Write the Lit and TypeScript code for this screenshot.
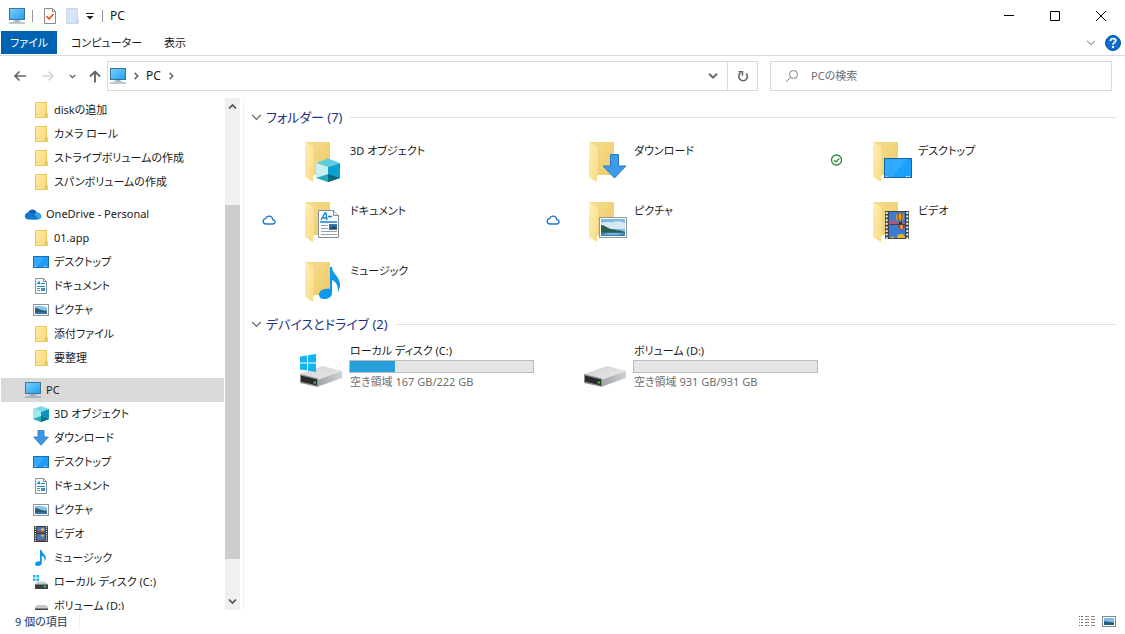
import { LitElement, html, svg, css, nothing, TemplateResult, SVGTemplateResult } from "lit";
import { customElement, property } from "lit/decorators.js";

const icons: Record<string, TemplateResult> = {
  pc: html`<svg width="16" height="16" viewBox="0 0 16 16"><defs><linearGradient id="pcg" x1="0" y1="0" x2="1" y2="1"><stop offset="0" stop-color="#7fd0fb"/><stop offset="1" stop-color="#1f9fee"/></linearGradient></defs><rect x="0.5" y="0.5" width="15" height="11" fill="url(#pcg)" stroke="#3c7396"/><path d="M6 12h4v1.3H6z" fill="#a9bac5"/><path d="M4 13.3h8" stroke="#7c93a2" stroke-width=".7"/><path d="M0 15h16" stroke="#7e96a5"/></svg>`,
  folder: html`<svg width="16" height="16" viewBox="0 0 16 16"><defs><linearGradient id="sfg" x1="0" y1="0" x2="1" y2="1"><stop offset="0" stop-color="#ffe9a2"/><stop offset="1" stop-color="#fcdb78"/></linearGradient></defs><path d="M2.5.5h11v10.200l1 .8v4h-12z" fill="url(#sfg)" stroke="#eac858"/><path d="M12.500 15.300v-4.300l1.200-1" fill="none" stroke="#e3b93c"/></svg>`,
  cloud: html`<svg width="18" height="16" viewBox="0 0 18 16"><path d="M4 7C5 3.500 10 1.500 13 6.500L9 10z" fill="#0f5fae"/><path d="M12 6.200c3.300-.4 5.400 1.700 5.400 4 0 2-1.400 3.300-3.300 3.300H7z" fill="#35a5ea"/><path d="M4.700 6.300c2-.3 3.600.6 5 1.600l4.600 5.200c-.8.5-1.400.4-2.300.4H4.500C2.200 13.500.7 11.900.8 9.900.9 8 2.500 6.400 4.700 6.300z" fill="#1277cd"/></svg>`,
  desktop: html`<svg width="16" height="16" viewBox="0 0 16 16"><rect x=".5" y="2.500" width="15" height="11" fill="#1c9ef8" stroke="#176fae"/><path d="M1 3h11L4 13H1z" fill="#41b1ff" opacity=".6"/><path d="M2 12.500h1M11 12.500h3" stroke="#c3e7ff" stroke-dasharray="1 .5"/></svg>`,
  doc: html`<svg width="16" height="16" viewBox="0 0 16 16"><path d="M2.500.5h8l3 3v12h-11z" fill="#fafcfd" stroke="#8a949b"/><path d="M10.500.5v3h3" fill="none" stroke="#8a949b"/><path d="M4 6.500 6 3.200 7 6.500M5 5.500h2M8 5.500h4M4 8.500h8" fill="none" stroke="#1b87cf"/><path d="M4 10.500h3M4 12.500h3" stroke="#6f8796"/><path d="M8 10h4v3H8z" fill="#3b8fc6"/></svg>`,
  picture: html`<svg width="16" height="16" viewBox="0 0 16 16"><rect x=".5" y="2.500" width="15" height="11" fill="#fff" stroke="#8b959c"/><path d="M2 4h12v8H2z" fill="#83c1ee"/><path d="M2 6c4 0 6 3 12 2.800V10H2z" fill="#2d5c63"/><path d="M2 10h12v2H2z" fill="#376fae"/><path d="M9 4h5v2z" fill="#e6f3fc"/></svg>`,
  cube: html`<svg width="16" height="16" viewBox="0 0 16 16"><path d="m0 3 8-3 8 3-8 3z" fill="#79dbe8"/><path d="m0 3 8 3v10l-8-3z" fill="#a5e6ee"/><path d="m16 3-8 3v10l8-3z" fill="#0a96bd"/><path d="m0 13 8-3v6z" fill="#20aec1"/><path d="m16 13-8-3v6z" fill="#076c88"/></svg>`,
  down: html`<svg width="16" height="16" viewBox="0 0 16 16"><path d="M5 .5h6V7h4.300L8 15.300.7 7H5z" fill="#3c97e6" stroke="#2676bd" stroke-width=".8"/></svg>`,
  video: html`<svg width="16" height="16" viewBox="0 0 16 16"><path d="M1 0h14v16H1z" fill="#363636"/><path d="M2.500.5v15M13.500.5v15" stroke="#e8e8e8" stroke-width="1.400" stroke-dasharray="1.200 1"/><path d="M4 1h8v6H4zM4 8h8v7H4z" fill="#3e78c4"/><path d="M4 5h4l4 1v1H4zM4 13l4 1 4-1v2H4z" fill="#8a4a55"/><circle cx="9.500" cy="3.500" r="1.700" fill="#e8b02d"/><circle cx="9.500" cy="9.500" r="1.300" fill="#edb135"/></svg>`,
  music: html`<svg width="16" height="16" viewBox="0 0 16 16"><path d="M7 0h1.500c.3 3.500 4.500 4.200 4.300 8.300-.1 1.500-.8 2.700-1.300 3.200.6-3.600-.8-4.900-2.700-5.500v6.700C8.800 14.800 7 16 5 16c-1.700 0-3-.8-3-2.200 0-1.900 2.700-3.100 5-2.500z" fill="#0d93ea"/></svg>`,
  diskWin: html`<svg width="16" height="16" viewBox="0 0 16 16"><path d="M0 1h2.500v2.500H0zM3.500 1H6v2.500H3.500zM0 4.500h2.500V7H0zM3.500 4.500H6V7H3.500z" fill="#1bb4ee"/><path d="m2 10 2.500-2.500h7L15 10v1H2z" fill="#c6cacd"/><path d="M2 10.500h13V15H2z" fill="#3a3e42"/><path d="M11 12.500h2" stroke="#48df54" stroke-width="1.500"/></svg>`,
  disk: html`<svg width="16" height="16" viewBox="0 0 16 16"><path d="m2 9 2-2h9l2 2v2H2z" fill="#c6cacd"/><path d="M2 10.500h13V15H2z" fill="#3a3e42"/><path d="M11 12.500h2" stroke="#48df54" stroke-width="1.500"/></svg>`,
  statusCloud: html`<svg width="16" height="16" viewBox="0 0 16 16"><path d="M5.200 12h6.500c1.400 0 2.300-.9 2.300-2.100 0-1.300-1-2.200-2.300-2.200C11.500 5.500 10 4.200 8.100 4.200c-1.700 0-3 1-3.400 2.500C3.200 6.800 2.200 7.900 2.200 9.300 2.200 10.900 3.400 12 5.200 12z" fill="#fff" stroke="#2079c7" stroke-width="1.300"/></svg>`,
  statusOk: html`<svg width="16" height="16" viewBox="0 0 16 16"><circle cx="7.500" cy="8" r="5" fill="#fff" stroke="#2c8a3e" stroke-width="1.300"/><path d="m5 8 2 2 3.300-3.500" fill="none" stroke="#2c8a3e" stroke-width="1.200"/></svg>`,
};

const overlays: Record<string, SVGTemplateResult> = {
  cube: svg`<path d="m20 25 12-4.500L44 25l-12 4z" fill="#5ccde0"/><path d="m20 25 12 4v15l-12-4z" fill="#c5eff4"/><path d="m44 25-12 4v15l12-4z" fill="#0aa2d0"/><path d="m20 40 12-4v8z" fill="#24a9ba"/><path d="m44 40-12-4v8z" fill="#076a7c"/>`,
  down: svg`<path d="M30.500 16.500h8V28h7.500L34.500 40 23 28h7.500z" fill="#3c9bea" stroke="#2b7bc4"/>`,
  desktop: svg`<rect x="20.500" y="20.500" width="27" height="19" fill="#1b9ffa" stroke="#14659f"/><path d="M21 21h22L28 39h-7z" fill="#45b5ff" opacity=".5"/><path d="M22 38.500h1M42 38.500h4" stroke="#fff" stroke-dasharray="1 .6"/>`,
  doc: svg`<path d="M22.500 12.500h15l5 5v22h-20z" fill="#fafcfe" stroke="#828b92"/><path d="M37.500 12.500v5h5" fill="#e6ecf0" stroke="#828b92"/><path d="m25 22 4-7h1l1 7M27 20h4" fill="none" stroke="#1780d0" stroke-width="1.300"/><path d="M32 18.500h4M24 24h17" stroke="#1780d0" stroke-width="1.300"/><path d="M25 27.500h7M25 30.500h7M25 33.500h16M25 36.500h16" stroke="#98a2aa"/><path d="M33 26h8v5.500h-8z" fill="#3778a9"/><path d="m33 31 4-3 4 1v2.500h-8z" fill="#264e5a"/>`,
  picture: svg`<rect x="19.500" y="19.500" width="27" height="20" fill="#fff" stroke="#8e999f"/><path d="M21 21h24v17H21z" fill="#80b9e8"/><path d="M21 25c6-2 8 0 12-1s8-1 12 1v6H21z" fill="#d6e8f5"/><path d="M21 27c4 0 6 3 10 4s8 1 14 3v1H21z" fill="#28604f"/><path d="M21 34.500h24V38H21z" fill="#3c7eb9"/><path d="m21 36.500 9-1.500 15 .5-9 1.500z" fill="#7cbcdc"/>`,
  video: svg`<path d="M21 13h24v28H21z" fill="#3f4347"/><path d="M22.700 14v27M43.300 14v27" stroke="#f3f3f3" stroke-width="2" stroke-dasharray="2 1.600"/><path d="M25 14h16v12H25zM25 27h16v13H25z" fill="#3d7bd0"/><path d="M25 23c4-2 6 0 8 1l8 1v1H25z" fill="#aa5a78"/><circle cx="36" cy="19" r="4" fill="#e3a31b"/><path d="M35 15c-2 3-1 6 1 8M37 15c2 3 1 6 0 8" fill="none" stroke="#6b2e2d"/><path d="M35 24h3v2h-3z" fill="#302e39"/><path d="M34 27h7c0 3-2 4-3 5h-1c-1-1-3-2-3-5z" fill="#b93938"/><path d="M36.500 27h2v4h-2z" fill="#edc62f"/><path d="M33 40a4 4 0 0 1 8 0zM26 40a3 3 0 0 1 5 0z" fill="#e8b421"/>`,
  music: svg`<path d="M34 9h2c0 7 8 9 8 18 0 3-1 5-2 7 0-7-2-10-6-12v13c0 4-4 6-8 6-3 0-5-1.500-5-4.500 0-4 5-6.500 11-5.500z" fill="#0d97ee"/>`,
};

const bigIcon = (kind: string) => html`<svg width="48" height="48" viewBox="0 0 48 48">
  <defs>
    <linearGradient id="fb" x1="0" y1="0" x2="1" y2="1"><stop offset="0" stop-color="#f6dc90"/><stop offset="1" stop-color="#eecb68"/></linearGradient>
    <linearGradient id="ff" x1="0" y1="0" x2="1" y2="1"><stop offset="0" stop-color="#ffefb6"/><stop offset="1" stop-color="#f6da80"/></linearGradient>
  </defs>
  <path d="M9 4h25v33H15z" fill="url(#fb)"/><path d="m9 4 9 5v29h-1v6l-8-5z" fill="url(#ff)"/>
  ${overlays[kind]}</svg>`;

const bigDrive = (system: boolean) => html`<svg width="48" height="48" viewBox="0 0 48 48">
  <defs>
    <linearGradient id="dt" x1="0" y1="0" x2="1" y2="1"><stop offset="0" stop-color="#d1d3d5"/><stop offset="1" stop-color="#e7e8ea"/></linearGradient>
    <linearGradient id="ds" x1="0" y1="0" x2="1" y2="0"><stop offset="0" stop-color="#a0a3a6"/><stop offset="1" stop-color="#cfd2d4"/></linearGradient>
  </defs>
  <path d="M4 32 27 24l19 5-25 9z" fill="url(#dt)"/><path d="m21 38 25-9v7l-25 9z" fill="url(#ds)"/><path d="m4 32 18 4.500V45L4 41z" fill="#8b8e90"/><path d="m5 33.500 16 4v6l-16-4z" fill="#292b2d"/><path d="M17.500 39.500h2.500v2h-2.500z" fill="#39cf45"/>
  ${system ? svg`<path d="m4 14.500 7-1v7H4zM12 13.300l8-1.300v8.500h-8zM4 21.500h7v7l-7-1zM12 21.500h8V30l-8-1.300z" fill="#14b5ef"/>` : nothing}</svg>`;

const chevron = (dir: "down" | "up" | "right", size = 8, bold = 1.7) => {
  const d = { down: "m1 2.500 3.500 3.500L8 2.500", up: "m1 6.500 3.500-3.500L8 6.500", right: "m3 1 3.500 3.500L3 8" }[dir];
  return html`<svg width=${size} height=${size} viewBox="0 0 9 9"><path d=${d} fill="none" stroke="currentColor" stroke-width=${bold}/></svg>`;
};

interface NavItem { icon: string; label: string; top?: boolean; current?: boolean }

const navGroups: NavItem[][] = [
  [
    { icon: "folder", label: "diskの追加" },
    { icon: "folder", label: "カメラ ロール" },
    { icon: "folder", label: "ストライプボリュームの作成" },
    { icon: "folder", label: "スパンボリュームの作成" },
  ],
  [
    { icon: "cloud", label: "OneDrive - Personal", top: true },
    { icon: "folder", label: "01.app" },
    { icon: "desktop", label: "デスクトップ" },
    { icon: "doc", label: "ドキュメント" },
    { icon: "picture", label: "ピクチャ" },
    { icon: "folder", label: "添付ファイル" },
    { icon: "folder", label: "要整理" },
  ],
  [
    { icon: "pc", label: "PC", top: true, current: true },
    { icon: "cube", label: "3D オブジェクト" },
    { icon: "down", label: "ダウンロード" },
    { icon: "desktop", label: "デスクトップ" },
    { icon: "doc", label: "ドキュメント" },
    { icon: "picture", label: "ピクチャ" },
    { icon: "video", label: "ビデオ" },
    { icon: "music", label: "ミュージック" },
    { icon: "diskWin", label: "ローカル ディスク (C:)" },
    { icon: "disk", label: "ボリューム (D:)" },
  ],
];

const folders = [
  { label: "3D オブジェクト", icon: "cube" },
  { label: "ダウンロード", icon: "down" },
  { label: "デスクトップ", icon: "desktop", status: "statusOk" },
  { label: "ドキュメント", icon: "doc", status: "statusCloud" },
  { label: "ピクチャ", icon: "picture", status: "statusCloud" },
  { label: "ビデオ", icon: "video" },
  { label: "ミュージック", icon: "music" },
];

const drives = [
  { label: "ローカル ディスク (C:)", free: 167, total: 222, system: true },
  { label: "ボリューム (D:)", free: 931, total: 931, system: false },
];

const base = css`
  * { box-sizing: border-box; }
  svg { display: block; flex: none; }
  button { font: inherit; color: inherit; background: none; border: 0; padding: 0; display: flex; align-items: center; justify-content: center; }
  a { color: inherit; text-decoration: none; }
  ul { list-style: none; margin: 0; padding: 0; }
`;

@customElement("nav-pane")
export class NavPane extends LitElement {
  static styles = [base, css`
    :host { display: flex; width: 240px; flex: none; }
    .tree { flex: 1; min-width: 0; overflow: hidden; padding: 0 1px; }
    .group + .group { margin-top: 8px; }
    .row { display: flex; align-items: center; gap: 5px; height: 24px; padding-left: 32px; white-space: nowrap; }
    .row.top { padding-left: 24px; }
    .row.cloud { padding-left: 23px; gap: 4px; }
    .row.current { background: #d9d9d9; }
    .scroll { width: 15px; background: #f0f0f0; display: flex; flex-direction: column; color: #505050; }
    .scroll button { height: 17px; }
    .before { flex: 90; }
    .thumb { flex: 354; background: #cdcdcd; }
    .after { flex: 34; }
  `];
  render() {
    return html`
      <nav class="tree" aria-label="ナビゲーション">
        ${navGroups.map((g) => html`<ul class="group">${g.map((i) => html`
          <li><a href="#" class="row ${i.top ? "top" : ""} ${i.icon === "cloud" ? "cloud" : ""} ${i.current ? "current" : ""}">${icons[i.icon]}<span>${i.label}</span></a></li>`)}</ul>`)}
      </nav>
      <div class="scroll">
        <button aria-label="上へスクロール">${chevron("up", 9)}</button>
        <span class="before"></span><span class="thumb"></span><span class="after"></span>
        <button aria-label="下へスクロール">${chevron("down", 9)}</button>
      </div>`;
  }
}

@customElement("item-group")
export class ItemGroup extends LitElement {
  @property() heading = "";
  static styles = [base, css`
    :host { display: block; padding-bottom: 3px; }
    .head { display: flex; align-items: center; gap: 8px; height: 24px; margin: 0; font-size: 13px; font-weight: 400; line-height: 24px; color: #1e3287; }
    .head button { gap: 4px; white-space: nowrap; }
    .head svg { color: #666; }
    .head::after { content: ""; flex: 1; height: 1px; background: #e2e2e2; }
    .grid { display: grid; grid-template-columns: repeat(auto-fill, 284px); padding-left: 10px; }
  `];
  render() {
    return html`
      <h2 class="head"><button aria-expanded="true">${chevron("down", 11, 1)}<span>${this.heading}</span></button></h2>
      <div class="grid"><slot></slot></div>`;
  }
}

@customElement("app-root")
export class AppRoot extends LitElement {
  static styles = [base, css`
    :host { display: flex; flex-direction: column; height: 100vh; overflow: hidden; background: #fff; color: #1a1a1a;
      font: 11px/16px "Noto Sans", "Noto Sans CJK JP", sans-serif; font-feature-settings: "palt"; }
    .title { display: flex; align-items: center; height: 31px; padding: 0 1px 0 9px; }
    .title h1 { font-size: 12px; font-weight: 400; margin: 0 auto 0 7px; }
    .sep { width: 1px; height: 12px; background: #999; }
    .quick { display: flex; align-items: center; gap: 6px; padding: 0 8px 0 9px; }
    .app { padding-right: 7px; }
    .win { width: 46px; height: 31px; color: #000; }
    .ribbon { display: flex; height: 25px; padding: 0 4px 0 1px; border-bottom: 1px solid #dadbdc; align-items: center; }
    .tab { height: 24px; padding: 0 8px 0 14px; }
    .tab.file { width: 56px; padding: 0; background: #0063b1; color: #fff; align-self: flex-start; height: 23px; }
    .tools { margin-left: auto; display: flex; align-items: center; gap: 9px; color: #999; }
    .bar { display: flex; align-items: center; height: 42px; padding: 0 13px 2px 12px; color: #666; }
    .move { display: flex; align-items: center; justify-content: space-between; width: 90px; margin-right: 5px; }
    .address { flex: 1; display: flex; align-items: center; height: 30px; border: 1px solid #d9d9d9; padding-left: 2px; }
    .crumbs { display: flex; align-items: center; gap: 6px; flex: 1; font-size: 12px; }
    .crumbs a { color: #1a1a1a; }
    .drop { width: 28px; height: 28px; }
    .refresh { width: 30px; height: 28px; border-left: 1px solid #d9d9d9; }
    .search { display: flex; align-items: center; flex: 0 1 342px; height: 30px; margin-left: 12px; border: 1px solid #d9d9d9; padding-left: 14px; gap: 12px; }
    .search input { flex: 1; min-width: 0; border: 0; padding: 0; outline: 0; background: none; font: inherit; font-feature-settings: inherit; }
    .search input::placeholder { color: #6d6d6d; opacity: 1; }
    .body { flex: 1; min-height: 0; display: flex; gap: 3px; }
    .content { flex: 1; min-width: 0; border-left: 1px solid #f0f0f0; padding: 7px 8px 0 7px; overflow: hidden; }
    .item { display: flex; height: 60px; padding-top: 9px; }
    .status { width: 35px; padding-top: 14px; }
    .name { padding: 5px 0 0 6px; }
    .drive { display: flex; height: 60px; padding: 6px 0 0 35px; }
    .info { padding-left: 5px; display: flex; flex-direction: column; width: 190px; }
    .info label, .info small { padding-left: 1px; white-space: nowrap; }
    .info label { line-height: 18px; }
    .info small { font-size: 11px; line-height: 18px; color: #6d6d6d; }
    progress { appearance: none; display: block; width: 185px; height: 13px; border: 1px solid #bcbcbc; background: #e6e6e6; }
    progress::-webkit-progress-bar { background: #e6e6e6; }
    progress::-webkit-progress-value { background: #26a0da; }
    .foot { height: 24px; display: flex; align-items: center; padding: 0 8px 0 15px; color: #1e395b; }
    .count { padding-right: 11px; border-right: 1px solid #f0f0f0; }
    .views { margin-left: auto; display: flex; align-items: center; gap: 6px; padding-bottom: 3px; }
  `];
  render() {
    return html`
      <header class="title">
        <span class="app">${icons.pc}</span><span class="sep"></span>
        <div class="quick">
          <button aria-label="プロパティ"><svg width="16" height="16" viewBox="0 0 16 16"><path d="M2.500.5h8l3 3v12h-11z" fill="#fff" stroke="#8a8a8a"/><path d="M10.500.5v3h3" fill="none" stroke="#8a8a8a"/><path d="m4.500 8 2.500 3 4.500-5" fill="none" stroke="#e2592a" stroke-width="1.800"/></svg></button>
          <button aria-label="新しいフォルダー" disabled><svg width="16" height="16" viewBox="0 0 16 16"><path d="M2.500.5h11V11l1 .8v3.700h-12z" fill="#d7e3f7" stroke="#ccd6e8"/><path d="M12.500 15v-4l1-1" fill="none" stroke="#bcc8dd"/></svg></button>
          <button aria-label="カスタマイズ"><svg width="8" height="8" viewBox="0 0 8 8"><path d="M0 1.500h8" stroke="#222"/><path d="M0.500 4h7L4 7.500z" fill="#222"/></svg></button>
        </div>
        <span class="sep"></span><h1>PC</h1>
        <button class="win" aria-label="最小化"><svg width="10" height="10" viewBox="0 0 10 10"><path d="M0 4.500h10" stroke="#000"/></svg></button>
        <button class="win" aria-label="最大化"><svg width="10" height="10" viewBox="0 0 10 10"><path d="M.5.5h9v9h-9z" fill="none" stroke="#000"/></svg></button>
        <button class="win" aria-label="閉じる"><svg width="10" height="10" viewBox="0 0 10 10"><path d="m0 0 10 10M10 0 0 10" stroke="#000"/></svg></button>
      </header>
      <div class="ribbon">
        <button class="tab file">ファイル</button><button class="tab">コンピューター</button><button class="tab">表示</button>
        <div class="tools">
          <button aria-label="リボンの展開">${chevron("down", 10, 1)}</button>
          <button aria-label="ヘルプ"><svg width="16" height="16" viewBox="0 0 16 16"><circle cx="8" cy="8" r="7.500" fill="#0d6fd0" stroke="#0a4f9c"/><path d="M5.500 6c0-3.200 5.200-3 5.200-.2C10.700 7.500 8 7.700 8 9.700" fill="none" stroke="#fff" stroke-width="1.800"/><path d="M7 11h2v2H7z" fill="#fff"/></svg></button>
        </div>
      </div>
      <div class="bar">
        <div class="move">
          <button aria-label="戻る"><svg width="16" height="16" viewBox="0 0 16 16"><path d="M14 8H3M7.500 3.500 3 8l4.500 4.500" fill="none" stroke="#666" stroke-width="1.700"/></svg></button>
          <button aria-label="進む" disabled><svg width="16" height="16" viewBox="0 0 16 16"><path d="M2 8h11M8.500 3.500 13 8l-4.500 4.500" fill="none" stroke="#d3d3d3" stroke-width="1.500"/></svg></button>
          <button aria-label="最近表示した場所">${chevron("down", 7)}</button>
          <button aria-label="上へ"><svg width="14" height="16" viewBox="0 0 14 16"><path d="M7 14.500V4M2 8.500 7 3.500l5 5" fill="none" stroke="#666" stroke-width="1.900"/></svg></button>
        </div>
        <div class="address">
          <div class="crumbs">${icons.pc}${chevron("right")}<a href="#">PC</a>${chevron("right")}</div>
          <button class="drop" aria-label="以前の場所">${chevron("down", 10)}</button>
          <button class="refresh" aria-label="最新の情報に更新"><svg width="12" height="12" viewBox="0 0 12 12"><path d="M3.500 3A4.300 4.300 0 1 0 9.300 3.600" fill="none" stroke="#666" stroke-width="1.600"/><path d="M1.500 1.800h4v4" fill="none" stroke="#666" stroke-width="1.500"/></svg></button>
        </div>
        <label class="search"><svg width="14" height="14" viewBox="0 0 14 14"><circle cx="8.500" cy="5.500" r="4" fill="none" stroke="#808080"/><path d="M5.500 8.500 1 13" stroke="#808080"/></svg><input type="search" aria-label="PCの検索" placeholder="PCの検索"></label>
      </div>
      <div class="body">
        <nav-pane></nav-pane>
        <main class="content">
          <item-group heading="フォルダー (7)">
            ${folders.map((f) => html`<a href="#" class="item"><span class="status">${f.status ? icons[f.status] : nothing}</span>${bigIcon(f.icon)}<span class="name">${f.label}</span></a>`)}
          </item-group>
          <item-group heading="デバイスとドライブ (2)">
            ${drives.map((d, n) => html`<div class="drive">${bigDrive(d.system)}
              <div class="info"><label for="drive${n}">${d.label}</label><progress id="drive${n}" max=${d.total} value=${d.total - d.free}></progress><small>空き領域 ${d.free} GB/${d.total} GB</small></div></div>`)}
          </item-group>
        </main>
      </div>
      <footer class="foot"><span class="count">9 個の項目</span>
        <div class="views">
          <button aria-label="詳細"><svg width="16" height="12" viewBox="0 0 16 12"><path d="M0 1.500h4M0 4.500h4M0 7.500h4M0 10.500h4" stroke="#666" stroke-dasharray="1 1 2 9"/><path d="M6 1.500h4M6 4.500h4M6 7.500h4M6 10.500h4M12 1.500h4M12 4.500h4M12 7.500h4M12 10.500h4" stroke="#8a8a8a"/></svg></button>
          <button aria-label="大アイコン"><svg width="16" height="16" viewBox="0 0 16 16"><rect x="1.500" y="3.500" width="13" height="10" fill="#fff" stroke="#7b8c98"/><path d="M3 5h10v7H3z" fill="#7fbbe8"/><path d="m3 8 5 1 5 .5V12H3z" fill="#2a5f7a"/></svg></button>
        </div>
      </footer>`;
  }
}
